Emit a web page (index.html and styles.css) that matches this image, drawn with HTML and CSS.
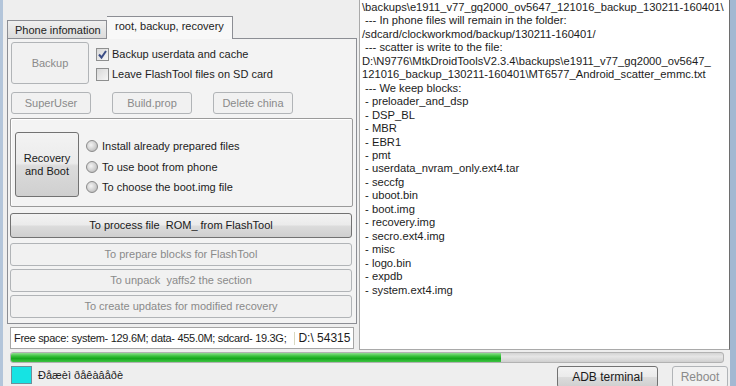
FILE: index.html
```html
<!DOCTYPE html>
<html>
<head>
<meta charset="utf-8">
<link rel="stylesheet" href="styles.css">
</head>
<body>
<div class="window">
  <div class="main">
    <div class="left">
      <div class="tabs">
        <div class="tab">Phone infomation</div>
        <div class="tab active">root, backup, recovery</div>
      </div>
      <div class="page">
        <div class="row1">
          <div class="btn off backup">Backup</div>
          <div class="checks">
            <div class="chk"><span class="box"><svg width="11" height="11" viewBox="0 0 11 11"><path d="M2 5.5 L4.5 8.5 L9 2" fill="none" stroke="#3b4d86" stroke-width="2"/></svg></span>Backup userdata and cache</div>
            <div class="chk"><span class="box"></span>Leave FlashTool files on SD card</div>
          </div>
        </div>
        <div class="row2">
          <div class="btn off small">SuperUser</div>
          <div class="btn off small">Build.prop</div>
          <div class="btn off small">Delete china</div>
        </div>
        <div class="group">
          <div class="btn on rec">Recovery<br>and Boot</div>
          <div class="radios">
            <div class="radio"><span class="dot"></span>Install already prepared files</div>
            <div class="radio"><span class="dot"></span>To use boot from phone</div>
            <div class="radio"><span class="dot"></span>To choose the boot.img file</div>
          </div>
        </div>
        <div class="btn on wide first">To process file&nbsp; ROM_ from FlashTool</div>
        <div class="btn off wide w2">To prepare blocks for FlashTool</div>
        <div class="btn off wide w3">To unpack&nbsp; yaffs2 the section</div>
        <div class="btn off wide w3">To create updates for modified recovery</div>
      </div>
      <div class="free"><span class="fs">Free space: system- 129.6M; data- 455.0M; sdcard- 19.3G;</span><span class="sep"></span><span class="drive">D:\ 54315</span></div>
    </div>
    <div class="log">
      <div>\backups\e1911_v77_gq2000_ov5647_121016_backup_130211-160401\</div>
      <div>&nbsp;--- In phone files will remain in the folder:</div>
      <div>/sdcard/clockworkmod/backup/130211-160401/</div>
      <div>&nbsp;--- scatter is write to the file:</div>
      <div>D:\N9776\MtkDroidToolsV2.3.4\backups\e1911_v77_gq2000_ov5647_</div>
      <div>121016_backup_130211-160401\MT6577_Android_scatter_emmc.txt</div>
      <div>&nbsp;--- We keep blocks:</div>
      <div>&nbsp;- preloader_and_dsp</div>
      <div>&nbsp;- DSP_BL</div>
      <div>&nbsp;- MBR</div>
      <div>&nbsp;- EBR1</div>
      <div>&nbsp;- pmt</div>
      <div>&nbsp;- userdata_nvram_only.ext4.tar</div>
      <div>&nbsp;- seccfg</div>
      <div>&nbsp;- uboot.bin</div>
      <div>&nbsp;- boot.img</div>
      <div>&nbsp;- recovery.img</div>
      <div>&nbsp;- secro.ext4.img</div>
      <div>&nbsp;- misc</div>
      <div>&nbsp;- logo.bin</div>
      <div>&nbsp;- expdb</div>
      <div>&nbsp;- system.ext4.img</div>
    </div>
  </div>
  <div class="progress"><div class="fill" style="width:490px"></div></div>
  <div class="bottom">
    <span class="cyan"></span>
    <span class="mode">Ðåæèì ðåêàâåðè</span>
    <div class="btn on adb">ADB terminal</div>
    <div class="btn off reboot">Reboot</div>
  </div>
</div>
</body>
</html>
```

FILE: styles.css
```css
* { box-sizing: border-box; }
html, body { margin: 0; padding: 0; }
body {
  width: 736px;
  height: 386px;
  overflow: hidden;
  background: #eeeeee;
  font-family: "Liberation Sans", Arial, sans-serif;
  font-size: 11px;
  color: #1c1c1c;
}
.window {
  height: 386px;
  border-left: 3px solid #b3c5da;
  border-right: 6px solid #a3b8d2;
  display: flex;
  flex-direction: column;
}
.main {
  display: flex;
  height: 350px;
}
.left {
  width: 354px;
  padding-left: 4px;
  padding-top: 16px;
  display: flex;
  flex-direction: column;
}
.tabs {
  display: flex;
  align-items: flex-end;
  height: 22px;
}
.tab {
  height: 18px;
  width: 100px;
  border: 1px solid #8c8e94;
  border-bottom: none;
  background: linear-gradient(#efefef, #dcdcdc);
  padding: 3px 0 0 7px;
  color: #222;
}
.tab.active {
  height: 23px;
  width: 126px;
  margin-bottom: -1px;
  border-left: none;
  background: #f8f8f8;
  padding: 3px 0 0 8px;
  position: relative;
  z-index: 1;
}
.page {
  width: 350px;
  height: 286px;
  border: 1px solid #8c8e94;
  background: #f3f3f3;
  padding: 3px 0 0 2px;
  display: flex;
  flex-direction: column;
}
.btn {
  display: flex;
  align-items: center;
  justify-content: center;
  text-align: center;
  border-radius: 3px;
  line-height: 13px;
}
.btn.off {
  border: 1px solid #b1b4b7;
  background: #f1f1f1;
  color: #8a8a8a;
}
.btn.on {
  border: 1px solid #727272;
  background: linear-gradient(#f3f3f3 0%, #ebebeb 48%, #dcdcdc 52%, #cfcfcf 100%);
  color: #1a1a1a;
}
.row1 {
  display: flex;
  height: 42px;
}
.backup {
  width: 78px;
  height: 42px;
  margin-left: 1px;
}
.checks {
  margin-left: 7px;
  padding-top: 2px;
}
.chk {
  height: 20px;
  display: flex;
  align-items: center;
}
.box {
  width: 13px;
  height: 13px;
  border: 1px solid #8e8f8f;
  background: linear-gradient(135deg, #d8d8d8, #f6f6f6);
  margin-right: 3px;
  display: flex;
  align-items: center;
  justify-content: center;
}
.row2 {
  display: flex;
  gap: 21px;
  margin-top: 8px;
  margin-left: 1px;
}
.small {
  width: 80px;
  height: 22px;
}
.group {
  margin-top: 4px;
  width: 343px;
  height: 89px;
  border: 1px solid #9a9a9a;
  box-shadow: inset 1px 1px 0 #ffffff;
  border-radius: 2px;
  display: flex;
  padding: 13px 0 0 4px;
}
.rec {
  width: 64px;
  height: 65px;
}
.radios {
  margin-left: 7px;
  padding-top: 4px;
}
.radio {
  height: 20.5px;
  display: flex;
  align-items: center;
}
.dot {
  width: 12px;
  height: 12px;
  border-radius: 50%;
  border: 1px solid #8b8b8b;
  background: radial-gradient(circle at 40% 40%, #f4f4f4 0%, #cfcfcf 55%, #a9a9a9 100%);
  margin-right: 4px;
}
.wide {
  width: 342px;
}
.first {
  margin-top: 6px;
  height: 25px;
}
.w2 {
  margin-top: 5px;
  height: 23px;
}
.w3 {
  margin-top: 3px;
  height: 23px;
}
.free {
  margin-top: 3px;
  margin-left: 3px;
  width: 344px;
  height: 22px;
  border: 1px solid #a5a5a5;
  background: #ffffff;
  white-space: nowrap;
  overflow: hidden;
  padding: 4px 0 0 3px;
  display: flex;
  align-items: flex-start;
}
.fs {
  letter-spacing: -0.3px;
}
.sep {
  width: 1px;
  height: 13px;
  background: #d8d8c0;
  margin: 0 3px 0 8px;
  flex: none;
}
.drive {
  font-size: 12px;
  margin-top: -1px;
}
.log {
  flex: 1;
  margin-left: 2px;
  height: 350px;
  background: #ffffff;
  border-left: 1px solid #a9a9a9;
  border-bottom: 1px solid #a9a9a9;
  border-right: 1px solid #6e6e6e;
  padding: 1px 0 0 2px;
  line-height: 13.45px;
  font-size: 11.2px;
  white-space: nowrap;
  overflow: hidden;
}
.progress {
  margin-top: 2px;
  margin-left: 7px;
  width: 714px;
  height: 14px;
  border: 1px solid #b2b2b2;
  border-radius: 3px;
  background: linear-gradient(#d4d4d4, #e6e6e6 40%, #cfcfcf);
  overflow: hidden;
}
.fill {
  height: 100%;
  background: linear-gradient(#8fe08f 0%, #39c13c 35%, #17a81d 60%, #3fc443 100%);
}
.bottom {
  margin-top: 3px;
  display: flex;
  align-items: flex-start;
  height: 20px;
}
.cyan {
  width: 21px;
  height: 18px;
  margin-left: 8px;
  border: 1px solid #6d8f9a;
  background: #16e3e3;
}
.mode {
  margin-left: 6px;
  margin-top: 3px;
}
.adb {
  margin-left: auto;
  width: 101px;
  height: 22px;
  font-size: 12px;
}
.reboot {
  margin-left: 14px;
  margin-right: 2px;
  width: 56px;
  height: 22px;
  font-size: 12px;
}
```
